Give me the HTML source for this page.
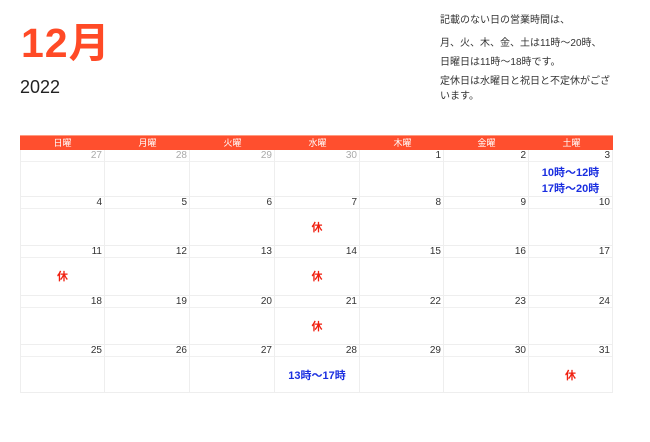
<!DOCTYPE html><html><head><meta charset="utf-8"><style>
body{margin:0;width:650px;height:442px;background:#fff;font-family:"Liberation Sans","Noto Sans CJK JP",sans-serif;position:relative;overflow:hidden}
.a{position:absolute;white-space:nowrap}
.m{left:21px;top:18px;font-size:41px;color:#ff4a26;line-height:50px;font-weight:bold;letter-spacing:1px}
.y{left:20px;top:76px;font-size:18px;color:#222;line-height:22px}
.n{left:440px;font-size:10px;color:#333;line-height:14px}
.hd{position:absolute;left:20px;top:135px;width:593px;height:15px;background:#ff4f2e;border-top:1px solid #ff9a80;box-sizing:border-box}
.hd span{position:absolute;top:0;width:85px;text-align:center;color:#fff;font-size:9px;line-height:14px}
.c{position:absolute;border-right:1px solid #eee;border-bottom:1px solid #eee;box-sizing:border-box}
.c .d{height:11px;border-bottom:1px solid #f0f0f0;text-align:right;font-size:10px;line-height:11px;padding-right:2px;color:#333}
.c .d.g{color:#aaa}
.c .t{text-align:center;font-size:11px;font-weight:bold;line-height:15px}
.r{color:#f02010}.b{color:#1a2ee0}
</style></head><body>
<div class="a m">12月</div>
<div class="a y">2022</div>
<div class="a n" style="top:14px">記載のない日の営業時間は、</div>
<div class="a n" style="top:37px">月、火、木、金、土は11時〜20時、</div>
<div class="a n" style="top:56px">日曜日は11時〜18時です。</div>
<div class="a n" style="top:75px">定休日は水曜日と祝日と不定休がござ</div>
<div class="a n" style="top:90px">います。</div>
<div class="hd">
<span style="left:0">日曜</span><span style="left:85px">月曜</span><span style="left:170px">火曜</span><span style="left:255px">水曜</span><span style="left:340px">木曜</span><span style="left:424px">金曜</span><span style="left:509px">土曜</span>
</div>
<div id="g"></div>
<script>
var xs=[20,105,190,275,360,444,529,613],ys=[150,197,246,296,345,393];
var days=[[27,28,29,30,1,2,3],[4,5,6,7,8,9,10],[11,12,13,14,15,16,17],[18,19,20,21,22,23,24],[25,26,27,28,29,30,31]];
var ex={"0,6":'<div class="t b" style="padding-top:3px;line-height:16px">10時〜12時<br>17時〜20時</div>',"1,3":'<div class="t r" style="padding-top:12px">休</div>',"2,0":'<div class="t r" style="padding-top:12px">休</div>',"2,3":'<div class="t r" style="padding-top:12px">休</div>',"3,3":'<div class="t r" style="padding-top:12px">休</div>',"4,3":'<div class="t b" style="padding-top:12px">13時〜17時</div>',"4,6":'<div class="t r" style="padding-top:12px">休</div>'};
var h='';
for(var r=0;r<5;r++)for(var c=0;c<7;c++){
h+='<div class="c" style="left:'+xs[c]+'px;top:'+ys[r]+'px;width:'+(xs[c+1]-xs[c])+'px;height:'+(ys[r+1]-ys[r])+'px;'+(c==0?'border-left:1px solid #eee;':'')+'"><div class="d'+(r==0&&c<4?' g':'')+'">'+days[r][c]+'</div>'+(ex[r+','+c]||'')+'</div>';}
document.getElementById('g').innerHTML=h;
</script>
</body></html>
